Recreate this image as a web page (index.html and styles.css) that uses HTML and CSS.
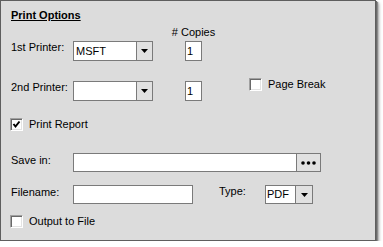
FILE: index.html
```html
<!DOCTYPE html>
<html lang="en">
<head>
    <meta charset="UTF-8">
    <title>Print Options</title>
    <link rel="stylesheet" href="styles.css">
</head>
<body>
    <div class="panel">
        <div class="title">Print Options</div>

        <div class="copiesHead"><span>#&nbsp;Copies</span></div>

        <div class="row">
            <span class="lbl">1st Printer:</span>
            <div class="combo">
                <span class="comboTxt">MSFT</span>
                <span class="arrow"><svg width="7" height="4" viewBox="0 0 7 4"><polygon points="0,0 7,0 3.5,4" fill="#000"/></svg></span>
            </div>
            <div class="copies">1</div>
        </div>

        <div class="row row2">
            <span class="lbl">2nd Printer:</span>
            <div class="combo">
                <span class="comboTxt"></span>
                <span class="arrow"><svg width="7" height="4" viewBox="0 0 7 4"><polygon points="0,0 7,0 3.5,4" fill="#000"/></svg></span>
            </div>
            <div class="copies">1</div>
            <label class="chk pageBreak"><span class="box"></span>Page Break</label>
        </div>

        <label class="chk printReport"><span class="box"><svg width="9" height="9" viewBox="0 0 9 9"><polyline points="1.5,4 3.5,6.5 7.5,1.5" fill="none" stroke="#000" stroke-width="2"/></svg></span>Print Report</label>

        <div class="row saveRow">
            <span class="lbl">Save in:</span>
            <div class="pathBox">
                <span class="pathTxt"></span>
                <span class="dots"><svg width="15" height="4" viewBox="0 0 15 4"><circle cx="2" cy="2" r="1.8"/><circle cx="7.5" cy="2" r="1.8"/><circle cx="13" cy="2" r="1.8"/></svg></span>
            </div>
        </div>

        <div class="row fileRow">
            <span class="lbl">Filename:</span>
            <div class="fileBox"></div>
            <span class="typeLbl">Type:</span>
            <div class="combo typeCombo">
                <span class="comboTxt">PDF</span>
                <span class="arrow"><svg width="7" height="4" viewBox="0 0 7 4"><polygon points="0,0 7,0 3.5,4" fill="#000"/></svg></span>
            </div>
        </div>

        <label class="chk outFile"><span class="box"></span>Output to File</label>
    </div>
</body>
</html>
```

FILE: styles.css
```css
*{
    box-sizing: border-box;
}
body{
    margin: 0;
    background: #fff;
    font-family: "Liberation Sans", Arial, sans-serif;
    font-size: 11px;
    color: #000;
}
.panel{
    width: 376px;
    height: 241px;
    background: #dcdcdc;
    border: 1px solid #5e5e5e;
    box-shadow: 1px 1px 0 #6a6a6a, 2px 2px 1px #8a8a8a, 3px 3px 3px rgba(0,0,0,.35);
    padding: 8px 0 0 8px;
    display: flex;
    flex-direction: column;
    align-items: flex-start;
}
.title{
    font-weight: bold;
    line-height: 13px;
    margin-left: 2px;
    text-decoration: underline;
    text-underline-offset: 1px;
}
.copiesHead{
    margin: 4px 0 0 176px;
    width: 17px;
    line-height: 13px;
    display: flex;
    justify-content: center;
    white-space: nowrap;
}
.row{
    display: flex;
    align-items: flex-start;
    margin-top: 2px;
    height: 20px;
}
.row2{
    margin-top: 20px;
}
.lbl{
    width: 64px;
    padding-left: 2px;
    line-height: 13px;
}
.combo{
    width: 80px;
    height: 20px;
    background: #fff;
    border: 1px solid #7a7a7a;
    display: flex;
}
.comboTxt{
    flex: 1;
    line-height: 18px;
    padding-left: 2px;
}
.arrow{
    width: 16px;
    border-left: 1px solid #7a7a7a;
    background: #e1e1e1;
    display: flex;
    align-items: center;
    justify-content: center;
}
.copies{
    width: 17px;
    height: 20px;
    margin-left: 32px;
    background: #fff;
    border: 1px solid #7a7a7a;
    line-height: 18px;
    padding-left: 1px;
}
.chk{
    display: flex;
    align-items: center;
    line-height: 13px;
}
.box{
    width: 13px;
    height: 13px;
    margin-right: 6px;
    background: #fff;
    border-top: 1px solid #a0a0a0;
    border-left: 1px solid #a0a0a0;
    border-right: 1px solid #fff;
    border-bottom: 1px solid #fff;
    box-shadow: inset 1px 1px 0 #696969, inset -1px -1px 0 #e3e3e3;
    display: flex;
    align-items: center;
    justify-content: center;
}
.pageBreak{
    margin: -3px 0 0 47px;
}
.printReport{
    margin-top: 17px;
    margin-left: 1px;
}
.saveRow{
    margin-top: 22px;
    height: 19px;
}
.saveRow .lbl, .fileRow .lbl{
    line-height: 14px;
}
.pathBox{
    width: 248px;
    height: 19px;
    display: flex;
    border: 1px solid #7a7a7a;
    background: #fff;
}
.pathTxt{
    flex: 1;
}
.dots{
    width: 24px;
    border-left: 1px solid #7a7a7a;
    background: #e1e1e1;
    display: flex;
    align-items: center;
    justify-content: center;
}
.fileRow{
    margin-top: 13px;
    height: 19px;
}
.fileBox{
    width: 120px;
    height: 19px;
    border: 1px solid #7a7a7a;
    background: #fff;
}
.typeLbl{
    margin-left: 26px;
    width: 46px;
    line-height: 13px;
}
.typeCombo{
    width: 48px;
    height: 19px;
}
.typeCombo .comboTxt{
    line-height: 17px;
    padding-left: 1px;
}
.typeCombo .arrow{
    width: 17px;
}
.outFile{
    margin-top: 11px;
    margin-left: 1px;
}
```
